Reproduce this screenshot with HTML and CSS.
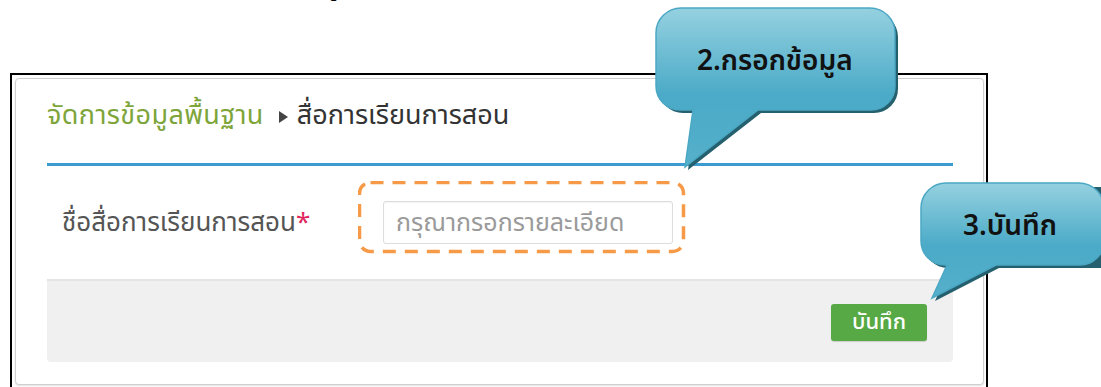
FILE: index.html
```html
<!DOCTYPE html>
<html>
  <head>
    <meta charset="utf-8" />
    <title>สื่อการเรียนการสอน</title>
    <link rel="stylesheet" href="styles.css">
  </head>
  <body>
    <div class="cut-text">ขู</div>

    <div class="frame">
      <div class="panel">
        <div class="panel-head">
          <span class="crumb-root">จัดการข้อมูลพื้นฐาน</span>
          <span class="crumb-sep"></span>
          <span class="crumb-current">สื่อการเรียนการสอน</span>
        </div>
        <div class="form-row">
          <label class="field-label" for="txtName">ชื่อสื่อการเรียนการสอน<span class="req">*</span></label>
          <input id="txtName" class="field-input" type="text" placeholder="กรุณากรอกรายละเอียด" />
        </div>
        <div class="panel-foot">
          <button type="button" class="btn-save">บันทึก</button>
        </div>
      </div>
    </div>

    <!-- annotations -->
    <svg class="mark-input" width="330" height="75" viewBox="0 0 330 75">
      <rect x="1.5" y="1.5" width="324" height="69" rx="11" ry="11" />
    </svg>

    <div class="callout callout-fill">
      <svg width="252" height="170" viewBox="0 0 252 170">
        <defs>
          <linearGradient id="bubbleA" x1="0" y1="0" x2="0" y2="1">
            <stop offset="0" stop-color="#95d1e0" />
            <stop offset="0.55" stop-color="#4aaac7" />
            <stop offset="1" stop-color="#55b0cb" />
          </linearGradient>
        </defs>
        <path class="bubble-shadow" d="M31 8 H223 A25 25 0 0 1 248 33 V85 A24 24 0 0 1 224 109 H111 L38 166 L46 109 H33 A24 24 0 0 1 9 85 V33 A25 25 0 0 1 31 8 Z" />
        <path class="bubble-body" fill="url(#bubbleA)" d="M31 4 H220 A25 25 0 0 1 245 29 V82 A24 24 0 0 1 221 106 H108 L35 163 L43 106 H30 A24 24 0 0 1 6 82 V29 A25 25 0 0 1 31 4 Z" />
      </svg>
      <span class="callout-text">2.กรอกข้อมูล</span>
    </div>

    <div class="callout callout-save">
      <svg width="185" height="125" viewBox="0 0 185 125">
        <defs>
          <linearGradient id="bubbleB" x1="0" y1="0" x2="0" y2="1">
            <stop offset="0" stop-color="#95d1e0" />
            <stop offset="0.55" stop-color="#4aaac7" />
            <stop offset="1" stop-color="#55b0cb" />
          </linearGradient>
        </defs>
        <path class="bubble-shadow" d="M31 8 H185 V89 H80 L16 122 L31 89 H29 A24 24 0 0 1 5 65 V33 A25 25 0 0 1 31 8 Z" />
        <path class="bubble-body" fill="url(#bubbleB)" d="M28 4 H160 A25 25 0 0 1 185 29 V62 A24 24 0 0 1 161 86 H77 L13 119 L28 86 H26 A24 24 0 0 1 2 62 V29 A25 25 0 0 1 28 4 Z" />
      </svg>
      <span class="callout-text">3.บันทึก</span>
    </div>
  </body>
</html>
```

FILE: styles.css
```css
html,
body {
  height: 387px;
  overflow: hidden;
}
body {
  margin: 0;
  padding: 0;
  position: relative;
  background: #fff;
  font-family: Tahoma, "Noto Sans Thai", "Noto Sans", "DejaVu Sans", sans-serif;
}

.cut-text {
  position: absolute;
  left: 326px;
  top: -24px;
  font-size: 22px;
  line-height: 26px;
  font-weight: bold;
  color: #000;
}

.frame {
  margin: 73px 0 0 10px;
  width: 974px;
  height: 340px;
  border: 2px solid #000;
}
.panel {
  margin: 3px 2px 0 3px;
  padding: 0 30px 22px 31px;
  border: 1px solid #cfcfcf;
  border-radius: 4px;
  box-shadow: 0 1px 2px rgba(0, 0, 0, 0.12);
  background: #fff;
}

.panel-head {
  display: flex;
  align-items: center;
  height: 74px;
  padding-bottom: 10px;
  border-bottom: 3px solid #3c9bd0;
  font-size: 27px;
  line-height: 36px;
}
.crumb-root {
  color: #7da53a;
  letter-spacing: 0.4px;
}
.crumb-sep {
  width: 0;
  height: 0;
  margin: 2px 9px 0 15px;
  border-top: 6px solid transparent;
  border-bottom: 6px solid transparent;
  border-left: 9px solid #444;
}
.crumb-current {
  color: #333;
}

.form-row {
  display: flex;
  align-items: center;
  height: 113px;
  padding-left: 15px;
}
.field-label {
  width: 321px;
  font-size: 26px;
  color: #555;
}
.req {
  color: #e0245e;
}
.field-input {
  box-sizing: border-box;
  width: 290px;
  height: 43px;
  padding: 0 12px;
  border: 1px solid #dcdcdc;
  border-radius: 3px;
  font-family: inherit;
  font-size: 25px;
  color: #555;
  box-shadow: inset 0 1px 1px rgba(0, 0, 0, 0.04);
}
.field-input::placeholder {
  color: #9a9a9a;
}

.panel-foot {
  display: flex;
  justify-content: flex-end;
  align-items: center;
  height: 81px;
  padding-right: 26px;
  border-top: 2px solid #e4e4e4;
  border-radius: 0 0 4px 4px;
  background: #f1f0f1;
}
.btn-save {
  width: 96px;
  height: 37px;
  margin-top: 2px;
  padding: 0;
  border: none;
  border-radius: 3px;
  background: #56a944;
  color: #fff;
  font-family: inherit;
  font-size: 22px;
  font-weight: 500;
  box-shadow: 0 1px 1px rgba(0, 0, 0, 0.15);
}

/* annotations drawn over the page */
.mark-input {
  position: absolute;
  left: 358px;
  top: 181px;
}
.mark-input rect {
  fill: none;
  stroke: #f79a48;
  stroke-width: 3.5;
  stroke-dasharray: 13 9;
}

.callout {
  position: absolute;
}
.callout svg {
  display: block;
}
.bubble-shadow {
  fill: #25606f;
}
.bubble-body {
  stroke: #4ba8c4;
  stroke-width: 1.5;
}
.callout-text {
  position: absolute;
  font-size: 28px;
  line-height: 34px;
  font-weight: 600;
  color: #111;
  white-space: nowrap;
}
.callout-fill {
  left: 650px;
  top: 4px;
}
.callout-fill .callout-text {
  left: 47px;
  top: 41px;
}
.callout-save {
  left: 919px;
  top: 179px;
}
.callout-save .callout-text {
  left: 44px;
  top: 31px;
}
```
